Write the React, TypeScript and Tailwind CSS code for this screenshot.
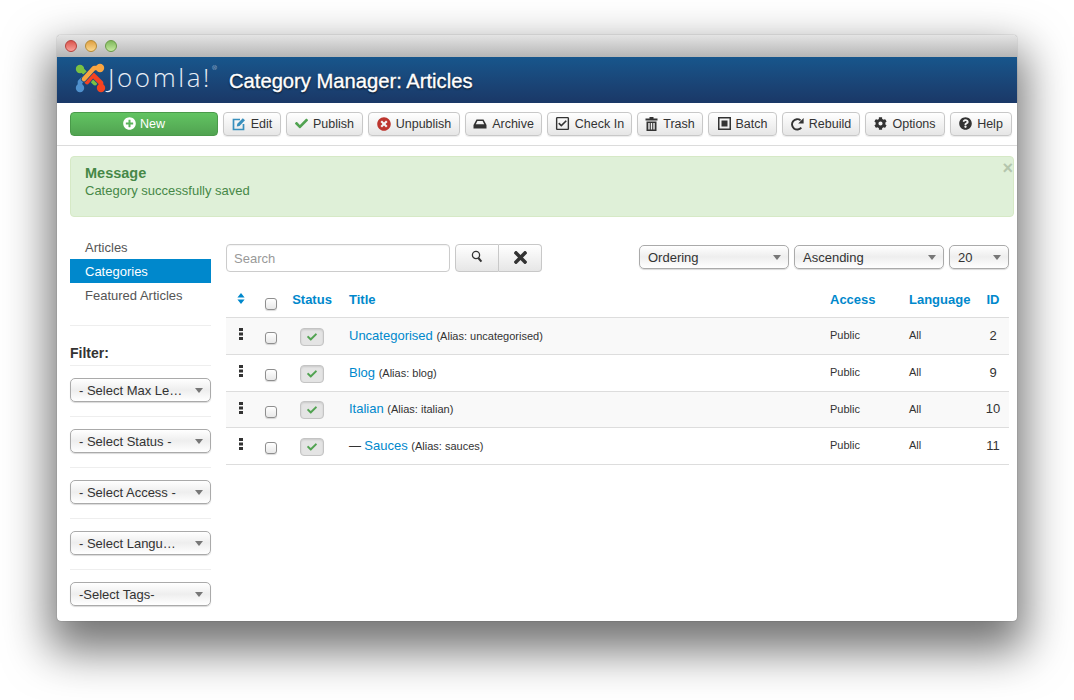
import React from "react";
import { FaPlusCircle, FaCheck, FaTimesCircle, FaRegCheckSquare, FaCog, FaQuestionCircle, FaTimes } from "react-icons/fa";

const EditIcon = () => (
  <svg width="14" height="14" viewBox="0 0 14 14" fill="none">
    <path d="M8 2.5H1.5v10h10V7" stroke="#378fbd" strokeWidth="1.7" />
    <path d="M4.8 9.4l.5-2.6L10.8 1.2l2.2 2.1-5.5 5.6z" fill="#378fbd" />
  </svg>
);
const ArchiveIcon = () => (
  <svg width="14" height="12" viewBox="0 0 14 12" fill="#333">
    <path d="M3.5 1.5h7L13.5 7v3.5h-13V7zM4.4 3 2.8 6.2h8.4L9.6 3z" fillRule="evenodd" />
  </svg>
);
const TrashIcon = () => (
  <svg width="13" height="14" viewBox="0 0 13 14" fill="#333">
    <path d="M4.5 0h4v1.5h4V3.5H.5V1.5h4zM1.5 4.5h10V14h-10zM3.3 6v6.5h1.4V6zM5.8 6v6.5h1.4V6zM8.3 6v6.5h1.4V6z" fillRule="evenodd" />
  </svg>
);
const BatchIcon = () => (
  <svg width="13" height="13" viewBox="0 0 13 13" fill="#333">
    <path d="M0 0h13v13H0zM1.5 1.5v10h10v-10z" fillRule="evenodd" />
    <rect x="3.5" y="3.5" width="6" height="6" />
  </svg>
);
const RebuildIcon = () => (
  <svg width="13" height="14" viewBox="0 0 13 14" fill="none">
    <path d="M10.3 10.6A5.2 5.2 0 1 1 9.6 3.4" stroke="#333" strokeWidth="1.9" />
    <path d="M12.6 1v5.4H7.2z" fill="#333" />
  </svg>
);
const SearchIcon = () => (
  <svg width="14" height="14" viewBox="0 0 14 14" fill="none" stroke="#333">
    <circle cx="6" cy="5" r="3.6" strokeWidth="1.3" />
    <path d="M8.4 8l3 3.6" strokeWidth="2" />
  </svg>
);
const SortIcon = () => (
  <svg width="8" height="11" viewBox="0 0 8 11" fill="#0088cc">
    <path d="M4 0l3.6 4.4H.4zM4 11L.4 6.6h7.2z" />
  </svg>
);
const DragIcon = () => (
  <svg width="4" height="12" viewBox="0 0 4 12" fill="#333">
    <rect width="4" height="3" />
    <rect y="4.5" width="4" height="3" />
    <rect y="9" width="4" height="3" />
  </svg>
);
const JoomlaMark = () => {
  const pieces = [
    { c: "#7ac143", d: "M5 7 L5 6 L12 13 L20 21", cx: 5, cy: 7 },
    { c: "#5091cd", d: "M5 26 L5 20 L10 15 L17 9", cx: 5, cy: 26 },
    { c: "#f44321", d: "M26 26 L26 21 L18 13 L12 20", cx: 26, cy: 26 },
    { c: "#f9a541", d: "M25 6 L19 6 L9 17", cx: 25, cy: 6 },
  ];
  return (
    <svg className="ml-[18px] -mt-[5px] shrink-0" width="31" height="31" viewBox="0 0 31 31" fill="none" strokeLinecap="round" strokeLinejoin="round">
      {pieces.map((p) => (
        <g key={p.c}>
          <path d={p.d} stroke="#18497f" strokeWidth="6.2" />
          <path d={p.d} stroke={p.c} strokeWidth="4.6" />
          <circle cx={p.cx} cy={p.cy} r="4.2" fill={p.c} />
        </g>
      ))}
    </svg>
  );
};

const Caret = () => (
  <span className="w-0 h-0 border-l-[4px] border-r-[4px] border-t-[5px] border-l-transparent border-r-transparent border-t-[#777]" />
);

const Select = ({ label, w }: { label: string; w: string }) => (
  <div className={`${w} h-6 flex items-center justify-between pl-[8px] pr-[7px] rounded-[5px] border border-[#aaa] bg-gradient-to-b from-white via-[#eee] to-white shadow-[0_1px_1px_rgba(0,0,0,0.15)] text-[13px] text-[#333]`}>
    <span className="whitespace-nowrap pt-[1px]">{label}</span>
    <Caret />
  </div>
);

const tools: { label: string; w: string; icon: React.ReactNode }[] = [
  { label: "Edit", w: "w-[58px]", icon: <EditIcon /> },
  { label: "Publish", w: "w-[77px]", icon: <FaCheck size={13} color="#51a351" /> },
  { label: "Unpublish", w: "w-[92px]", icon: <FaTimesCircle size={14} color="#bd362f" /> },
  { label: "Archive", w: "w-[77px]", icon: <ArchiveIcon /> },
  { label: "Check In", w: "w-[85px]", icon: <FaRegCheckSquare size={15} color="#333" /> },
  { label: "Trash", w: "w-[66px]", icon: <TrashIcon /> },
  { label: "Batch", w: "w-[69px]", icon: <BatchIcon /> },
  { label: "Rebuild", w: "w-[78px]", icon: <RebuildIcon /> },
  { label: "Options", w: "w-[80px]", icon: <FaCog size={13} color="#333" /> },
  { label: "Help", w: "w-[62px]", icon: <FaQuestionCircle size={13} color="#333" /> },
];

const rows = [
  { prefix: "", title: "Uncategorised", alias: "uncategorised", id: 2, h: "h-[37px]" },
  { prefix: "", title: "Blog", alias: "blog", id: 9, h: "h-[37px]" },
  { prefix: "", title: "Italian", alias: "italian", id: 10, h: "h-[36px]" },
  { prefix: "— ", title: "Sauces", alias: "sauces", id: 11, h: "h-[37px]" },
];

const Check = () => (
  <span className="block w-[12px] h-[12px] rounded-[3px] border border-[#8f8f8f] bg-gradient-to-b from-white to-[#e8e8e8] shadow-[0_1px_1px_rgba(0,0,0,0.15)]" />
);

const filters = ["- Select Max Le…", "- Select Status -", "- Select Access -", "- Select Langu…", "-Select Tags-"];

export default function App() {
  return (
    <div className="w-[1074px] h-[700px] overflow-hidden bg-white pt-[35px] pl-[57px] font-['Liberation_Sans',Arial,sans-serif] text-[13px] text-[#333]">
      <div className="w-[960px] h-[586px] rounded-[4px] bg-white shadow-[0_22px_45px_8px_rgba(0,0,0,0.55),0_0_1px_rgba(0,0,0,0.6)] overflow-hidden flex flex-col">
        {/* title bar */}
        <div className="h-[22px] shrink-0 flex items-center gap-[8px] pl-[8px] bg-gradient-to-b from-[#e4e4e4] to-[#b6b6b6]">
          <span className="w-[12px] h-[12px] rounded-full border border-[#b5403a] bg-gradient-to-b from-[#d9534c] to-[#f9a09a]" />
          <span className="w-[12px] h-[12px] rounded-full border border-[#b58a33] bg-gradient-to-b from-[#dfa040] to-[#fbd98d]" />
          <span className="w-[12px] h-[12px] rounded-full border border-[#6a9a45] bg-gradient-to-b from-[#7fb85c] to-[#c6ea9f]" />
        </div>
        {/* header */}
        <div className="h-[46px] shrink-0 flex items-center bg-gradient-to-b from-[#17568c] to-[#1a3867]">
          <JoomlaMark />
          <span className="ml-[2px] -mt-[7px] w-[109px] font-['Open_Sans',sans-serif] font-light text-[26px] leading-none text-[#e8eef5] tracking-[2.6px] whitespace-nowrap">
            Joomla!<sup className="text-[6px] align-[14px] tracking-normal">®</sup>
          </span>
          <span className="ml-[12px] mt-[2px] text-[20.2px] text-white [-webkit-text-stroke:0.35px_white] [text-shadow:0_1px_2px_rgba(0,0,0,0.9)] whitespace-nowrap">
            Category Manager: Articles
          </span>
        </div>
        {/* toolbar */}
        <div className="h-[43px] shrink-0 flex items-center gap-[5px] pl-[13px] pb-[1px] border-b border-[#dcdcdc]">
          <div className="w-[148px] h-[24px] flex items-center justify-center gap-[4px] rounded-[4px] border border-[#4a9a4a] bg-gradient-to-b from-[#62c462] to-[#51a351] text-white text-[12.5px]">
            <FaPlusCircle size={13} color="#fff" />
            <span className="pt-[2px]">New</span>
          </div>
          {tools.map((t) => (
            <div key={t.label} className={`${t.w} h-[24px] flex items-center justify-center gap-[5px] rounded-[4px] border border-[#c8c8c8] bg-gradient-to-b from-white to-[#e6e6e6] shadow-[0_1px_1px_rgba(0,0,0,0.08)] text-[12.5px] text-[#333]`}>
              {t.icon}
              <span className="pt-[2px]">{t.label}</span>
            </div>
          ))}
        </div>
        {/* body */}
        <div className="flex-1 px-[13px] pt-[10px]">
          <div className="relative w-[944px] h-[61px] rounded-[4px] border border-[#d6e9c6] bg-[#dff0d8] pl-[14px] pt-[7px] text-[#468847]">
            <div className="text-[14.5px] font-bold leading-[18px]">Message</div>
            <div className="text-[13px] leading-[17px]">Category successfully saved</div>
            <span className="absolute right-[0px] top-[2px] text-[18px] font-bold leading-[18px] text-[#b4c6ad]">×</span>
          </div>
          <div className="flex mt-[18px]">
            {/* sidebar */}
            <div className="w-[141px] shrink-0">
              <div className="h-[24px] pl-[15px] pt-[2px] flex items-center text-[#555]">Articles</div>
              <div className="h-[24px] pl-[15px] pt-[2px] flex items-center bg-[#0088cc] text-white">Categories</div>
              <div className="h-[24px] pl-[15px] pt-[2px] flex items-center text-[#555]">Featured Articles</div>
              <div className="mt-[18px] border-t border-[#eee]" />
              <div className="mt-[18px] text-[14px] font-bold leading-[18px]">Filter:</div>
              <div className="mt-[3px]">
                {filters.map((f) => (
                  <div key={f} className="border-t border-[#eee] pt-[12px] pb-[14px]">
                    <Select label={f} w="w-[141px]" />
                  </div>
                ))}
              </div>
            </div>
            {/* main */}
            <div className="ml-[15px] w-[783px] mt-[9px]">
              <div className="flex items-center h-[28px]">
                <div className="w-[224px] h-[28px] rounded-[4px] border border-[#ccc] pl-[7px] pt-[2px] flex items-center text-[#999] shadow-[inset_0_1px_1px_rgba(0,0,0,0.05)]">Search</div>
                <div className="ml-[5px] w-[44px] h-[28px] flex items-center justify-center pb-[2px] rounded-l-[4px] border border-[#c8c8c8] bg-gradient-to-b from-white to-[#e6e6e6]"><SearchIcon /></div>
                <div className="w-[43px] h-[28px] flex items-center justify-center pb-[1px] rounded-r-[4px] border border-l-0 border-[#c8c8c8] bg-gradient-to-b from-white to-[#e6e6e6]"><FaTimes size={19} color="#333" /></div>
                <div className="ml-auto flex gap-[5px] pb-[2px]">
                  <Select label="Ordering" w="w-[150px]" />
                  <Select label="Ascending" w="w-[150px]" />
                  <Select label="20" w="w-[60px]" />
                </div>
              </div>
              <table className="w-[783px] table-fixed border-collapse mt-[11px]">
                <colgroup>
                  <col className="w-[30px]" />
                  <col className="w-[30px]" />
                  <col className="w-[52px]" />
                  <col />
                  <col className="w-[79px]" />
                  <col className="w-[78px]" />
                  <col className="w-[30px]" />
                </colgroup>
                <thead>
                  <tr className="h-[34px] border-b border-[#ddd] text-[#0088cc] font-bold text-[13px]">
                    <th className="pb-[2px]"><span className="flex justify-center"><SortIcon /></span></th>
                    <th className="pt-[8px]"><span className="flex justify-center"><Check /></span></th>
                    <th className="text-center font-bold whitespace-nowrap">Status</th>
                    <th className="text-left pl-[11px] font-bold">Title</th>
                    <th className="text-left pl-[8px] font-bold">Access</th>
                    <th className="text-left pl-[8px] font-bold">Language</th>
                    <th className="text-center pr-[2px] font-bold">ID</th>
                  </tr>
                </thead>
                <tbody>
                  {rows.map((r, i) => (
                    <tr key={r.id} className={`${r.h} border-b border-[#ddd] ${i % 2 === 0 ? "bg-[#f9f9f9]" : "bg-white"}`}>
                      <td className="pb-[3px]"><span className="flex justify-center"><DragIcon /></span></td>
                      <td className="pt-[5px]"><span className="flex justify-center"><Check /></span></td>
                      <td className="pt-[2px]">
                        <span className="mx-auto flex items-center justify-center w-[24px] h-[18px] rounded-[4px] border border-[#c4c4c4] bg-[#e4e4e4] shadow-[inset_0_1px_2px_rgba(0,0,0,0.12)]">
                          <FaCheck size={10} color="#51a351" />
                        </span>
                      </td>
                      <td className="pl-[11px] whitespace-nowrap">
                        {r.prefix && <span className="text-[12px]">{r.prefix}</span>}
                        <span className="text-[13px] text-[#0088cc]">{r.title}</span>{" "}
                        <span className="text-[11px]">(Alias: {r.alias})</span>
                      </td>
                      <td className="pl-[8px] text-[11px]">Public</td>
                      <td className="pl-[8px] text-[11px]">All</td>
                      <td className="text-center pr-[2px] text-[13px]">{r.id}</td>
                    </tr>
                  ))}
                </tbody>
              </table>
            </div>
          </div>
        </div>
      </div>
    </div>
  );
}
